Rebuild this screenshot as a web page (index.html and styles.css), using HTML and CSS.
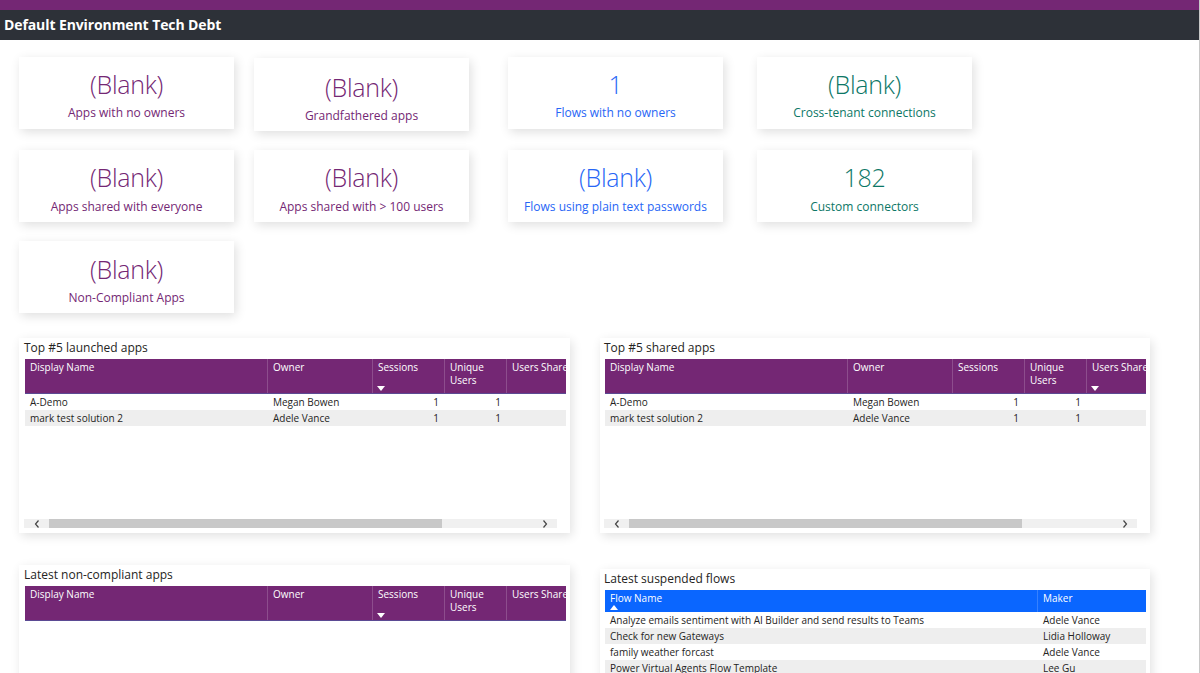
FILE: index.html
```html
<!DOCTYPE html>
<html lang="en">
<head>
<meta charset="utf-8">
<title>Default Environment Tech Debt</title>
<link rel="stylesheet" href="styles.css">
</head>
<body>
<div class="topbar"></div>
<header class="titlebar">Default Environment Tech Debt</header>
<main class="canvas">
  <div class="card-row row1">
    <div class="card c1 purple"><div class="value">(Blank)</div><div class="label">Apps with no owners</div></div>
    <div class="card c2 purple tall"><div class="value">(Blank)</div><div class="label">Grandfathered apps</div></div>
    <div class="card c3 blue"><div class="value">1</div><div class="label">Flows with no owners</div></div>
    <div class="card c4 teal"><div class="value">(Blank)</div><div class="label">Cross-tenant connections</div></div>
  </div>
  <div class="card-row row2">
    <div class="card c1 purple"><div class="value">(Blank)</div><div class="label">Apps shared with everyone</div></div>
    <div class="card c2 purple"><div class="value">(Blank)</div><div class="label">Apps shared with &gt; 100 users</div></div>
    <div class="card c3 blue"><div class="value">(Blank)</div><div class="label">Flows using plain text passwords</div></div>
    <div class="card c4 teal"><div class="value">182</div><div class="label">Custom connectors</div></div>
  </div>
  <div class="card-row row3">
    <div class="card c1 purple"><div class="value">(Blank)</div><div class="label">Non-Compliant Apps</div></div>
  </div>

  <div class="panel-row prow1">
    <section class="panel p-left">
      <div class="panel-title">Top #5 launched apps</div>
      <div class="tbl">
        <div class="thead purple-head">
          <div class="th w-name">Display Name</div>
          <div class="th w-owner">Owner</div>
          <div class="th w-sess">Sessions<svg class="sort" width="8" height="5" viewBox="0 0 8 5"><path d="M0 0H8L4 5Z" fill="#fff"/></svg></div>
          <div class="th w-uniq">Unique<br>Users</div>
          <div class="th w-shared">Users Shared</div>
        </div>
        <div class="tr">
          <div class="td w-name">A-Demo</div><div class="td w-owner">Megan Bowen</div><div class="td w-sess num">1</div><div class="td w-uniq num">1</div><div class="td w-shared"></div>
        </div>
        <div class="tr alt">
          <div class="td w-name">mark test solution 2</div><div class="td w-owner">Adele Vance</div><div class="td w-sess num">1</div><div class="td w-uniq num">1</div><div class="td w-shared"></div>
        </div>
      </div>
      <div class="hscroll">
        <div class="arrow"><svg width="6" height="8" viewBox="0 0 6 8"><path d="M4.5 0.5L1.5 4L4.5 7.5" fill="none" stroke="#444" stroke-width="1.2"/></svg></div>
        <div class="thumb"></div>
        <div class="track"></div>
        <div class="arrow"><svg width="6" height="8" viewBox="0 0 6 8"><path d="M1.5 0.5L4.5 4L1.5 7.5" fill="none" stroke="#444" stroke-width="1.2"/></svg></div>
      </div>
    </section>
    <section class="panel p-right">
      <div class="panel-title">Top #5 shared apps</div>
      <div class="tbl">
        <div class="thead purple-head">
          <div class="th w-name">Display Name</div>
          <div class="th w-owner">Owner</div>
          <div class="th w-sess">Sessions</div>
          <div class="th w-uniq">Unique<br>Users</div>
          <div class="th w-shared">Users Shared<svg class="sort" width="8" height="5" viewBox="0 0 8 5"><path d="M0 0H8L4 5Z" fill="#fff"/></svg></div>
        </div>
        <div class="tr">
          <div class="td w-name">A-Demo</div><div class="td w-owner">Megan Bowen</div><div class="td w-sess num">1</div><div class="td w-uniq num">1</div><div class="td w-shared"></div>
        </div>
        <div class="tr alt">
          <div class="td w-name">mark test solution 2</div><div class="td w-owner">Adele Vance</div><div class="td w-sess num">1</div><div class="td w-uniq num">1</div><div class="td w-shared"></div>
        </div>
      </div>
      <div class="hscroll">
        <div class="arrow"><svg width="6" height="8" viewBox="0 0 6 8"><path d="M4.5 0.5L1.5 4L4.5 7.5" fill="none" stroke="#444" stroke-width="1.2"/></svg></div>
        <div class="thumb"></div>
        <div class="track"></div>
        <div class="arrow"><svg width="6" height="8" viewBox="0 0 6 8"><path d="M1.5 0.5L4.5 4L1.5 7.5" fill="none" stroke="#444" stroke-width="1.2"/></svg></div>
      </div>
    </section>
  </div>

  <div class="panel-row prow2">
    <section class="panel p-left p-open">
      <div class="panel-title">Latest non-compliant apps</div>
      <div class="tbl">
        <div class="thead purple-head">
          <div class="th w-name">Display Name</div>
          <div class="th w-owner">Owner</div>
          <div class="th w-sess">Sessions<svg class="sort" width="8" height="5" viewBox="0 0 8 5"><path d="M0 0H8L4 5Z" fill="#fff"/></svg></div>
          <div class="th w-uniq">Unique<br>Users</div>
          <div class="th w-shared">Users Shared</div>
        </div>
      </div>
    </section>
    <section class="panel p-right p-open p-flows">
      <div class="panel-title">Latest suspended flows</div>
      <div class="tbl">
        <div class="thead blue-head">
          <div class="th w-flow">Flow Name<svg class="sort" width="8" height="5" viewBox="0 0 8 5"><path d="M0 5H8L4 0Z" fill="#fff"/></svg></div>
          <div class="th w-maker">Maker</div>
        </div>
        <div class="tr ftr"><div class="td w-flow">Analyze emails sentiment with AI Builder and send results to Teams</div><div class="td w-maker">Adele Vance</div></div>
        <div class="tr ftr alt"><div class="td w-flow">Check for new Gateways</div><div class="td w-maker">Lidia Holloway</div></div>
        <div class="tr ftr"><div class="td w-flow">family weather forcast</div><div class="td w-maker">Adele Vance</div></div>
        <div class="tr ftr alt"><div class="td w-flow">Power Virtual Agents Flow Template</div><div class="td w-maker">Lee Gu</div></div>
      </div>
    </section>
  </div>
</main>
</body>
</html>
```

FILE: styles.css
```css
* { box-sizing: border-box; }
html, body { margin: 0; padding: 0; }
body {
  width: 1200px;
  height: 673px;
  overflow: hidden;
  background: #ffffff;
  font-family: "Segoe UI", "Open Sans", "Noto Sans", sans-serif;
  color: #252423;
  border-right: 1px solid #c8c8c8;
}
.topbar { height: 10px; background: #742774; }
.titlebar {
  height: 30px;
  background: #2d3138;
  color: #ffffff;
  font-weight: 700;
  font-size: 14px;
  line-height: 30px;
  padding-left: 4px;
  letter-spacing: -0.1px;
}
.canvas { padding-top: 17px; }

/* KPI cards */
.card-row { display: flex; align-items: flex-start; height: 72px; }
.row2 { margin-top: 21px; }
.row3 { margin-top: 19px; }
.card {
  width: 215px;
  height: 72px;
  background: #fff;
  box-shadow: 2px 3px 10px rgba(0,0,0,0.13);
  display: flex;
  flex-direction: column;
  align-items: center;
  padding-top: 9px;
}
.row3 .card { padding-top: 10px; }
.card.tall { height: 73px; margin-top: 1px; padding-top: 11px; }
.c1 { margin-left: 19px; }
.c2 { margin-left: 20px; }
.c3 { margin-left: 39px; }
.c4 { margin-left: 34px; }
.value { font-size: 25px; line-height: 36px; font-weight: 300; letter-spacing: -0.3px; }
.label { font-size: 12px; line-height: 17px; margin-top: 2px; }
.row2 .label { margin-top: 3px; }
.purple .value, .purple .label { color: #742774; }
.blue .value, .blue .label { color: #2766f6; }
.teal .value, .teal .label { color: #0c7766; }

/* panels */
.panel-row { display: flex; align-items: flex-start; }
.prow1 { margin-top: 25px; }
.prow2 { margin-top: 32px; }
.panel {
  background: #fff;
  box-shadow: 2px 3px 10px rgba(0,0,0,0.12);
  height: 195px;
  padding: 1px 4px 0 6px;
  display: flex;
  flex-direction: column;
}
.p-left { margin-left: 19px; width: 551px; }
.p-right { margin-left: 30px; width: 550px; padding-left: 5px; }
.p-open { height: 130px; }
.p-flows { margin-top: 4px; }
.panel-title { font-size: 12px; line-height: 17px; margin-left: -1px; height: 20px; color: #252423; }
.tbl { overflow: hidden; width: 541px; flex: 1; }
.p-right .tbl { width: 541px; }
.thead { display: flex; color: #fff; font-size: 10px; line-height: 13px; }
.purple-head { background: #742774; height: 35px; border-bottom: 1px solid #5b4a93; }
.blue-head { background: #0a66ff; height: 22px; }
.th {
  padding: 2px 5px 0 5px;
  border-right: 1px solid rgba(255,255,255,0.18);
  position: relative;
  flex: none;
  white-space: nowrap;
}
.th .sort { position: absolute; left: 4px; bottom: 2px; }
.blue-head .th .sort { left: 5px; bottom: 2px; }
.w-name { width: 243px; }
.w-owner { width: 105px; }
.w-sess { width: 72px; }
.w-uniq { width: 62px; }
.w-shared { width: 80px; border-right: none; }
.w-flow { width: 433px; }
.w-maker { width: 108px; border-right: none; }
.tr { display: flex; height: 16px; font-size: 10px; line-height: 16px; color: #252423; }
.tr.alt { background: #eeeeee; }
.td { padding: 0 5px; flex: none; white-space: nowrap; overflow: hidden; }
.td.num { text-align: right; padding-right: 6px; }
.ftr { height: 16px; }

/* scrollbar */
.hscroll { display: flex; height: 9px; margin: 0 9px 5px -1px; background: #f0f0f0; }
.hscroll .arrow { width: 25px; display: flex; align-items: center; justify-content: center; }
.hscroll .thumb { width: 393px; background: #c8c8c8; }
.hscroll .track { flex: 1; }
```
